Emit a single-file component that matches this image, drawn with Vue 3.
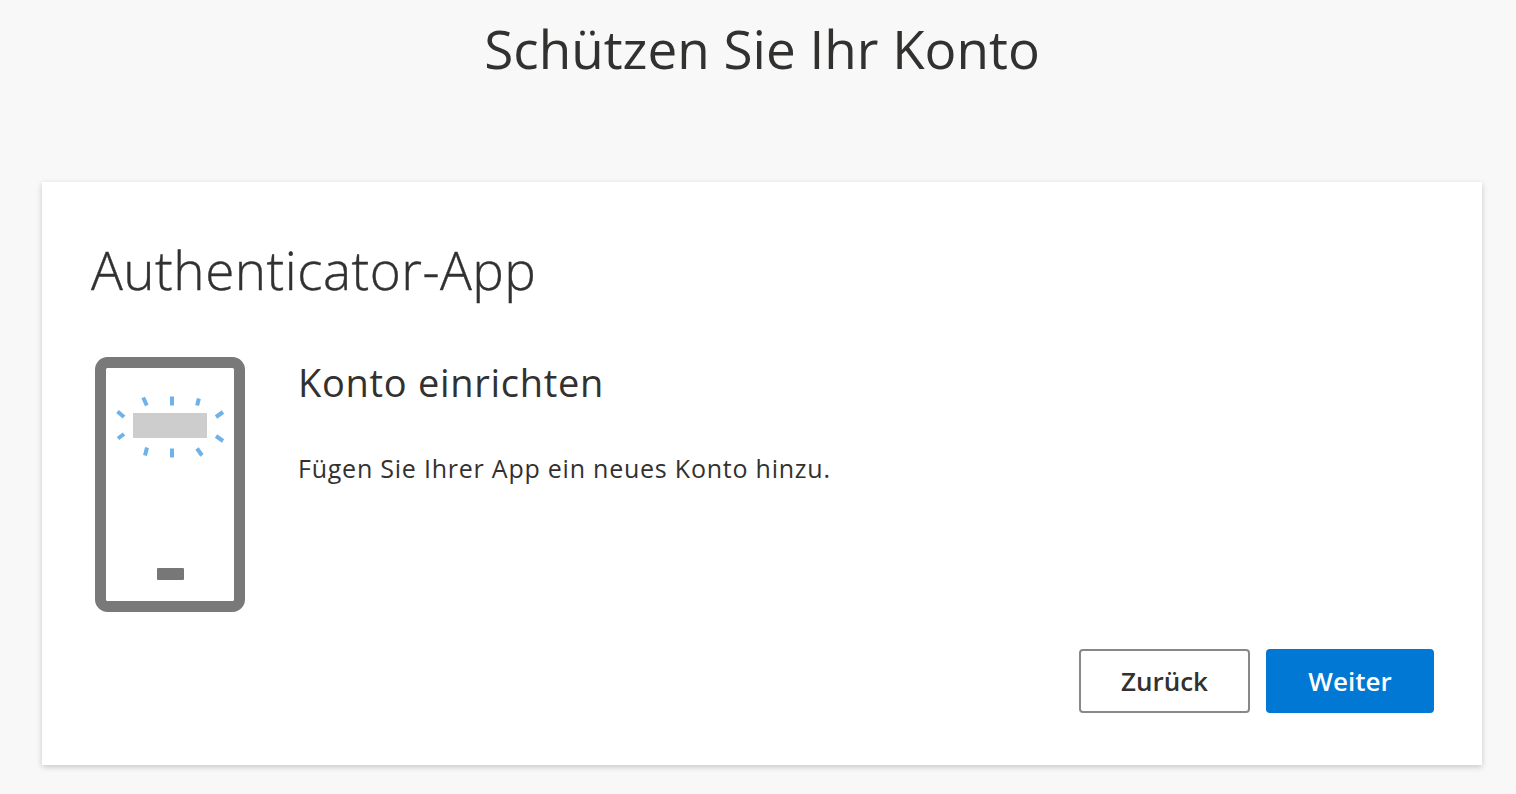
<script setup>
const marks = [
  [49.2, 16.5, 52.8, 24.5], [78, 15.5, 78, 24.5], [104.9, 17.5, 103.1, 24.5],
  [23.5, 30.5, 30, 36], [24, 57.5, 30, 53], [122, 36, 129, 31],
  [122, 55, 129, 60], [53, 66.5, 51, 74.5], [78, 67.5, 78, 76.5], [103, 67.5, 108, 74.5]
]
</script>

<template>
  <div class="page">
    <h1 class="title">Schützen Sie Ihr Konto</h1>
    <section class="card">
      <h2 class="card-title">Authenticator-App</h2>
      <div class="content">
        <svg class="phone" width="152" height="256" viewBox="0 0 152 256" aria-hidden="true">
          <rect x="6.5" y="6.5" width="139" height="244" rx="7" fill="#fff" stroke="#797979" stroke-width="11" />
          <g transform="translate(0 25)">
            <rect x="39" y="32" width="74" height="25" fill="#cdcdcd" />
            <line
              v-for="(m, i) in marks"
              :key="i"
              :x1="m[0]"
              :y1="m[1]"
              :x2="m[2]"
              :y2="m[3]"
              stroke="#6fb2ea"
              stroke-width="4"
            />
          </g>
          <rect x="63" y="212" width="27" height="12" rx="1" fill="#777" />
        </svg>
        <div class="text">
          <h3 class="step-title">Konto einrichten</h3>
          <p class="step-body">Fügen Sie Ihrer App ein neues Konto hinzu.</p>
        </div>
      </div>
      <div class="actions">
        <button class="btn secondary" type="button">Zurück</button>
        <button class="btn primary" type="button">Weiter</button>
      </div>
    </section>
  </div>
</template>

<style scoped>
.page {
  height: 794px;
  box-sizing: border-box;
  padding: 0 34px 0 42px;
  overflow: hidden;
  font-family: "Open Sans", "Noto Sans", sans-serif;
  color: #323130;
}
.title {
  margin: 0;
  height: 182px;
  padding-top: 14px;
  box-sizing: border-box;
  font-size: 53px;
  line-height: 70px;
  font-weight: 400;
  text-align: center;
}
.card {
  height: 583px;
  box-sizing: border-box;
  padding: 51px 48px 0 48px;
  background: #fff;
  box-shadow: 0 2px 6px rgba(0, 0, 0, 0.2);
}
.card-title {
  margin: 0 0 0 1px;
  font-size: 53px;
  line-height: 74px;
  font-weight: 300;
  letter-spacing: 0.5px;
  -webkit-text-stroke: 0.4px #323130;
}
.content {
  display: flex;
  margin-top: 49px;
  margin-left: 4px;
}
.phone {
  display: block;
  flex: none;
  filter: blur(0.6px);
}
.text {
  margin-left: 52px;
}
.step-title {
  margin: 0;
  font-size: 38px;
  line-height: 52px;
  font-weight: 400;
  letter-spacing: 0.7px;
}
.step-body {
  margin: 42px 0 0;
  font-size: 25px;
  line-height: 36px;
  letter-spacing: 0.77px;
}
.actions {
  display: flex;
  justify-content: flex-end;
  gap: 16px;
  margin-top: 37px;
}
.btn {
  height: 64px;
  box-sizing: border-box;
  border-radius: 4px;
  font-family: inherit;
  font-size: 26px;
  font-weight: 600;
  padding: 0;
}
.secondary {
  width: 171px;
  background: #fff;
  border: 2px solid #8a8886;
  color: #323130;
}
.primary {
  width: 168px;
  background: #0078d4;
  border: 0;
  color: #fff;
}
</style>

<style>
html, body {
  margin: 0;
  background: #f8f8f8;
}
</style>
